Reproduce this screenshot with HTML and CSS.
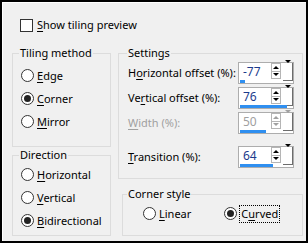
FILE: index.html
```html
<!DOCTYPE html>
<html lang="en">
<head>
    <meta charset="UTF-8" />
    <title>Tiling</title>
    <link rel="stylesheet" href="styles.css">
</head>
<body>

<div class="dialog">
    <div class="check">
        <span class="box"></span>
        <span><u>S</u>how tiling preview</span>
    </div>

    <div class="main">
        <div class="col">
            <fieldset class="group tiling">
                <legend>Tiling method</legend>
                <div class="inner">
                    <div class="option"><span class="radio"></span><span><u>E</u>dge</span></div>
                    <div class="option"><span class="radio on"></span><span><u>C</u>orner</span></div>
                    <div class="option"><span class="radio"></span><span><u>M</u>irror</span></div>
                </div>
            </fieldset>

            <fieldset class="group direction">
                <legend>Direction</legend>
                <div class="inner">
                    <div class="option"><span class="radio"></span><span><u>H</u>orizontal</span></div>
                    <div class="option"><span class="radio"></span><span><u>V</u>ertical</span></div>
                    <div class="option"><span class="radio on"></span><span><u>B</u>idirectional</span></div>
                </div>
            </fieldset>
        </div>

        <div class="col">
            <fieldset class="group settings">
                <legend>Settings</legend>
                <div class="inner">
                    <div class="field">
                        <span>H<u>o</u>rizontal offset (%):</span>
                        <div class="spin">
                            <div class="value">-77</div>
                            <div class="updown"><div class="up"></div><div class="down"></div></div>
                            <div class="drop"><div class="down"></div></div>
                            <div class="bar" style="width: 5px;"></div>
                        </div>
                    </div>
                    <div class="field">
                        <span>Ve<u>r</u>tical offset (%):</span>
                        <div class="spin">
                            <div class="value">76</div>
                            <div class="updown"><div class="up"></div><div class="down"></div></div>
                            <div class="drop"><div class="down"></div></div>
                            <div class="bar" style="width: 47px;"></div>
                        </div>
                    </div>
                    <div class="field disabled">
                        <span><u>W</u>idth (%):</span>
                        <div class="spin">
                            <div class="value">50</div>
                            <div class="updown"><div class="up"></div><div class="down"></div></div>
                            <div class="drop"><div class="down"></div></div>
                            <div class="bar" style="width: 26px;"></div>
                        </div>
                    </div>
                    <div class="field last">
                        <span><u>T</u>ransition (%):</span>
                        <div class="spin">
                            <div class="value">64</div>
                            <div class="updown"><div class="up"></div><div class="down"></div></div>
                            <div class="drop"><div class="down"></div></div>
                            <div class="bar" style="width: 33px;"></div>
                        </div>
                    </div>
                </div>
            </fieldset>

            <fieldset class="group corner">
                <legend>Corner style</legend>
                <div class="inner options-row">
                    <div class="option"><span class="radio"></span><span><u>L</u>inear</span></div>
                    <div class="option"><span class="radio on"></span><span class="focus">C<u>u</u>rved</span></div>
                </div>
            </fieldset>
        </div>
    </div>
</div>

</body>
</html>
```

FILE: styles.css
```css
body {
  margin: 0;
  font-family: "Noto Sans", "Open Sans", sans-serif;
  font-size: 11px;
  line-height: 16px;
  color: #000;
}

u {
  text-decoration-thickness: 1px;
  text-underline-offset: 2px;
}

.dialog {
  box-sizing: border-box;
  width: 308px;
  height: 243px;
  border: 2px solid #000;
  background-color: #f0f0f0;
  box-shadow: inset 1px 1px 0 #fff;
  padding: 15px 0 0 10px;
}

.check {
  display: flex;
  align-items: center;
  gap: 4px;
  margin-left: 8px;
  height: 16px;
}

.box {
  box-sizing: border-box;
  width: 13px;
  height: 13px;
  border: 1px solid #333;
  background-color: #fff;
}

.main {
  display: grid;
  grid-template-columns: 99px 185px;
  column-gap: 7px;
  margin-top: 12px;
}

.col {
  display: flex;
  flex-direction: column;
  min-width: 0;
}

.group {
  box-sizing: border-box;
  margin: 0;
  padding: 0;
  border: 1px solid #dcdcdc;
  min-width: 0;
}

.group legend {
  padding: 0 1px;
  margin-left: 6px;
  line-height: 16px;
}

.tiling .inner {
  padding: 3px 0 13px 8px;
}

.direction .inner {
  padding: 0 0 3px 8px;
}

.option {
  display: flex;
  align-items: center;
  gap: 3px;
  height: 23px;
  white-space: nowrap;
}

.radio {
  box-sizing: border-box;
  width: 13px;
  height: 13px;
  border: 1px solid #333;
  border-radius: 50%;
  background-color: #fff;
  display: flex;
  align-items: center;
  justify-content: center;
}

.radio.on::after {
  content: "";
  width: 7px;
  height: 7px;
  border-radius: 50%;
  background-color: #222;
}

.settings legend {
  margin-left: 8px;
}

.settings .inner {
  padding: 0 8px 10px 9px;
}

.field {
  display: grid;
  grid-template-columns: minmax(0, 1fr) 56px;
  align-items: center;
  height: 23px;
  margin-bottom: 2px;
  white-space: nowrap;
}

.field.last {
  margin-top: 11px;
  margin-bottom: 0;
}

.field.disabled {
  color: #a0a0a0;
}

.spin {
  box-sizing: border-box;
  display: grid;
  grid-template-columns: minmax(0, 1fr) 12px 10px;
  grid-template-rows: 16px 4px;
  height: 22px;
  border: 1px solid #adadad;
  background-color: #fff;
}

.value {
  grid-row: 1;
  grid-column: 1;
  padding: 1px 0 0 4px;
  line-height: 16px;
  color: #1c3b8c;
  font-size: 12px;
}

.disabled .value {
  color: #a0a0a0;
}

.bar {
  grid-row: 2;
  grid-column: 1 / 4;
  align-self: end;
  height: 3px;
  margin-left: 1px;
  background-color: #2f8ff0;
}

.updown {
  grid-row: 1;
  grid-column: 2;
  box-sizing: border-box;
  width: 10px;
  border: 1px solid #b5b5b5;
  display: grid;
  grid-template-rows: 1fr 1fr;
}

.updown > div {
  display: flex;
  align-items: center;
  justify-content: center;
}

.updown > div + div {
  border-top: 1px solid #b5b5b5;
}

.drop {
  grid-row: 1 / 3;
  grid-column: 3;
  box-sizing: border-box;
  margin-bottom: 2px;
  border-right: 1px solid #6d6d6d;
  border-bottom: 1px solid #6d6d6d;
  display: flex;
  align-items: center;
  justify-content: center;
}

.up::after,
.down::after {
  content: "";
  border-left: 3px solid transparent;
  border-right: 3px solid transparent;
}

.up::after {
  border-bottom: 3px solid #000;
}

.down::after {
  border-top: 3px solid #000;
}

.disabled .up::after {
  border-bottom-color: #a0a0a0;
}

.disabled .down::after {
  border-top-color: #a0a0a0;
}

.corner {
  margin-top: 7px;
  margin-left: 4px;
}

.corner legend {
  margin-left: 4px;
}

.options-row {
  display: flex;
  gap: 33px;
  padding: 0 0 10px 20px;
}

.focus {
  outline: 1px dotted #000;
  outline-offset: 0;
  padding: 0 1px;
}
```
